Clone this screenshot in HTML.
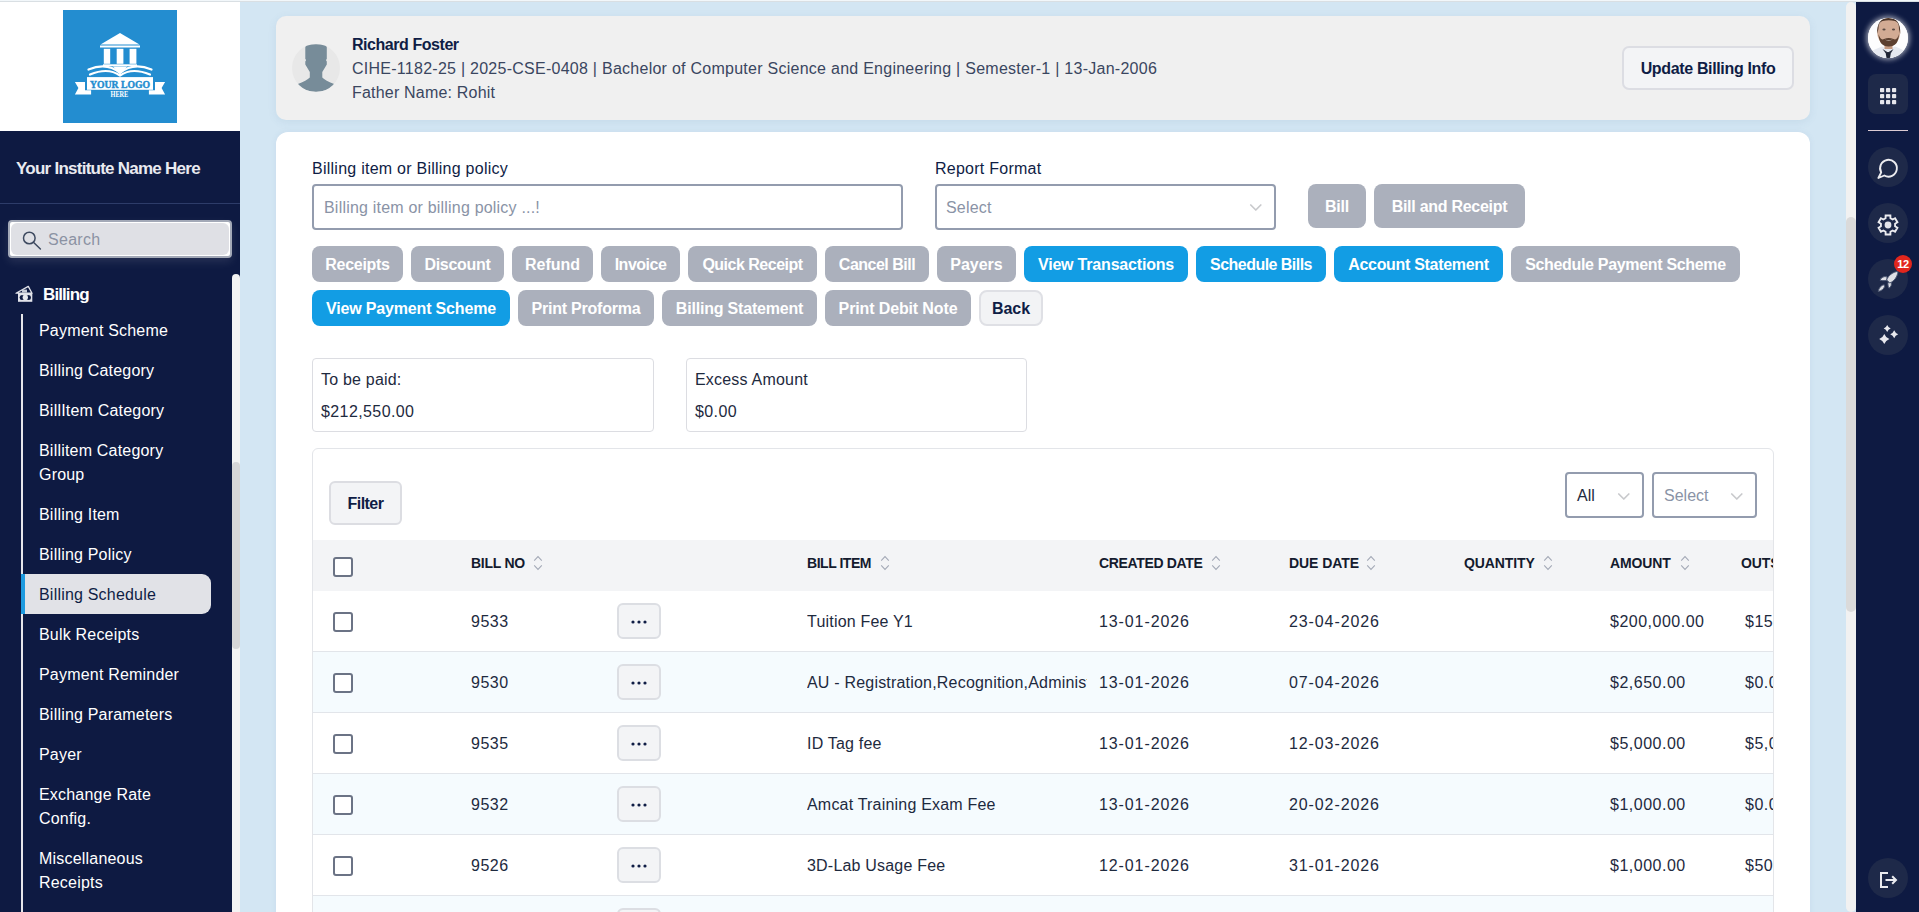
<!DOCTYPE html>
<html><head><meta charset="utf-8">
<style>
*{box-sizing:border-box;margin:0;padding:0}
html,body{width:1919px;height:912px;overflow:hidden}
body{font-family:"Liberation Sans",sans-serif;background:#d3e6f3;position:relative;color:#1b2540}
.abs{position:absolute}
.t{position:absolute;white-space:nowrap;line-height:20px}
/* sidebar */
#sb{left:0;top:0;width:240px;height:912px;background:#0e1a42}
#logoarea{left:0;top:0;width:240px;height:131px;background:#fff}
.mi{position:absolute;left:39px;color:#fff;font-size:16px;line-height:24px;white-space:nowrap;margin-top:1px;letter-spacing:0.2px}
/* rail */
#rail{left:1856px;top:0;width:63px;height:912px;background:#0e1a42}
.rc{position:absolute;left:12px;width:40px;height:40px;border-radius:50%;background:#1e2949}
/* buttons */
.btn{position:absolute;height:36px;border-radius:8px;background:#abb0bc;color:#fff;font-weight:700;font-size:16px;line-height:36px;padding-top:1px;text-align:center;white-space:nowrap}
.blue{background:#129de4}
.th{position:absolute;top:555px;font-weight:700;font-size:14px;line-height:16px;color:#141b2e;white-space:nowrap}
.cb{position:absolute;left:333px;width:20px;height:20px;border:2px solid #6b7385;border-radius:3px;background:#fff}
.row{position:absolute;left:313px;width:1460px;height:61px;border-bottom:1px solid #e2e5ea}
.td{position:absolute;font-size:16px;line-height:20px;color:#1e2a3e;white-space:nowrap;margin-top:1px;letter-spacing:0.3px}
.dots{position:absolute;left:617px;width:44px;height:36px;border:2px solid #dcdee3;border-radius:6px;background:#f3f4f6}
</style></head>
<body>
<div class="abs" style="left:0;top:0;width:1919px;height:1px;background:#f2f7fa;z-index:5"></div><div class="abs" style="left:0;top:1px;width:1919px;height:1px;background:#d9dfe3;z-index:5"></div>

<!-- SIDEBAR -->
<div id="sb" class="abs">
  <div id="logoarea" class="abs">
    <svg class="abs" style="left:63px;top:10px" width="114" height="113" viewBox="0 0 114 113">
      <rect width="114" height="113" fill="#238dd0"/>
      <g fill="#fff">
        <polygon points="57,23 37.5,34.6 76.5,34.6"/>
        <rect x="37" y="35.5" width="40" height="2"/>
        <rect x="40.8" y="38.8" width="6.4" height="15"/>
        <rect x="53.7" y="38.8" width="6.7" height="15"/>
        <rect x="66.6" y="38.8" width="6.8" height="15"/>
        <rect x="40" y="54.3" width="34" height="2"/>
        <polygon points="50,56.5 64.3,56.5 57,64"/>
      </g>
      <g fill="none" stroke="#fff" stroke-width="2.2" stroke-linecap="round">
        <path d="M25.5,59.5 Q44,52 57,63 Q70,52 88.5,59.5"/>
        <path d="M27,64.5 Q45,57 57,65.5 Q69,57 87,64.5"/>
      </g>
      <polygon fill="#fff" points="11.9,71.9 22,71.9 22,80.3 28.1,80.3 28.1,84.4 11.9,84.4 15.4,78.1"/>
      <polygon fill="#fff" points="102.1,71.9 92,71.9 92,80.3 85.9,80.3 85.9,84.4 102.1,84.4 98.6,78.1"/>
      <rect x="24" y="67.1" width="66" height="12.7" fill="#fff"/>
      <text x="27" y="78" font-family="Liberation Serif" font-weight="700" font-size="11.2" fill="#238dd0" stroke="#238dd0" stroke-width="0.45" textLength="60" lengthAdjust="spacingAndGlyphs">YOUR LOGO</text>
      <text x="47.5" y="87.2" font-family="Liberation Serif" font-weight="700" font-size="7.6" fill="#fff" textLength="17.8" lengthAdjust="spacingAndGlyphs">HERE</text>
    </svg>
  </div>
  <div class="t" style="left:16px;top:159px;font-size:17px;font-weight:700;color:#e9eaf0;letter-spacing:-0.75px">Your Institute Name Here</div>
  <div class="abs" style="left:0;top:203px;width:240px;height:1px;background:#2d3c69"></div>
  <div class="abs" style="left:8px;top:220px;width:224px;height:38px;background:#fff;border:2px solid #a3a9b7;border-radius:4px;box-shadow:0 4px 10px rgba(255,255,255,.10)">
    <div class="abs" style="left:1px;top:1px;right:1px;bottom:1px;background:#dfe0e5;border-radius:6px"></div>
    <svg class="abs" style="left:10px;top:8px" width="22" height="22" viewBox="0 0 22 22"><circle cx="9.3" cy="8" r="5.8" fill="none" stroke="#3e4a60" stroke-width="1.5"/><line x1="13.4" y1="12.2" x2="20.4" y2="19" stroke="#3e4a60" stroke-width="1.5" stroke-linecap="round"/></svg>
    <div class="t" style="left:38px;top:8px;font-size:16px;color:#8b92a3;letter-spacing:0.3px">Search</div>
  </div>
  <!-- scrollbar -->
  <div class="abs" style="left:232px;top:274px;width:8px;height:638px;background:#f3f3f3;border-radius:4px 4px 0 0"></div>
  <div class="abs" style="left:232px;top:462px;width:8px;height:187px;background:#d6d6d8;border-radius:4px"></div>
  <!-- billing -->
  <svg class="abs" style="left:15px;top:285px" width="19" height="18" viewBox="0 0 19 18">
    <polygon points="1,8.2 13.3,1.4 17,8.2" fill="#0e1a42" stroke="#e2e3ea" stroke-width="1.3" stroke-linejoin="round"/>
    <rect x="7" y="4.6" width="5" height="3" fill="#c8ccd8"/>
    <rect x="3" y="8" width="14.3" height="8.8" fill="#e2e3ea"/>
    <ellipse cx="7" cy="12.5" rx="2.4" ry="2.5" fill="#0e1a42"/>
    <ellipse cx="13.6" cy="12.5" rx="2.4" ry="2.5" fill="#0e1a42"/>
    <ellipse cx="10.3" cy="12.6" rx="2.7" ry="2.3" fill="#e8e9ef"/>
  </svg>
  <div class="t" style="left:43px;top:285px;font-size:17px;font-weight:700;color:#fff;letter-spacing:-0.9px">Billing</div>
  <div class="abs" style="left:21px;top:314px;width:2px;height:598px;background:#e6e6ea"></div>
  <div class="mi" style="top:318px">Payment Scheme</div>
  <div class="mi" style="top:358px">Billing Category</div>
  <div class="mi" style="top:398px">BillItem Category</div>
  <div class="mi" style="top:438px">Billitem Category</div>
  <div class="mi" style="top:462px">Group</div>
  <div class="mi" style="top:502px">Billing Item</div>
  <div class="mi" style="top:542px">Billing Policy</div>
  <div class="abs" style="left:21px;top:574px;width:190px;height:40px;background:#e1e2e7;border-radius:0 9px 9px 0;border-left:4px solid #1e9be0"></div>
  <div class="mi" style="top:582px;color:#0f1d45">Billing Schedule</div>
  <div class="mi" style="top:622px">Bulk Receipts</div>
  <div class="mi" style="top:662px">Payment Reminder</div>
  <div class="mi" style="top:702px">Billing Parameters</div>
  <div class="mi" style="top:742px">Payer</div>
  <div class="mi" style="top:782px">Exchange Rate</div>
  <div class="mi" style="top:806px">Config.</div>
  <div class="mi" style="top:846px">Miscellaneous</div>
  <div class="mi" style="top:870px">Receipts</div>
</div>

<!-- RAIL -->
<div id="rail" class="abs">
  <div class="abs" style="left:12px;top:18px;width:40px;height:40px;border-radius:50%;background:#f4f4f6;box-shadow:0 0 5px 2px rgba(255,255,255,.55);overflow:hidden">
    <svg width="40" height="40" viewBox="0 0 40 40">
      <rect width="40" height="40" fill="#fdfdfe"/>
      <path d="M0,40 L0,36 Q6,31 14,28.5 L20,31 L27,28.5 Q35,31 40,36 L40,40 Z" fill="#e6e9f0"/>
      <path d="M17.5,34 L23,34 L22,40 L18.5,40 Z" fill="#1e2434"/>
      <path d="M14.5,31 L20,34.5 L25.5,31 L23,35 L17.5,35 Z" fill="#2a3040"/>
      <rect x="16.5" y="24" width="8" height="7" fill="#c49a82"/>
      <ellipse cx="20.7" cy="14" rx="11.5" ry="14" fill="#d2ab94"/>
      <path d="M9.2,16 Q8.5,0 20.7,0 Q33,0 32.2,16 L31,11 Q31,4 27,3 Q20.7,1.5 14.5,3 Q10.5,4 10.4,11 Z" fill="#4a3428"/>
      <path d="M10.5,16 Q11,28.5 20.7,28.5 Q30.5,28.5 31,16 Q29,23 25.5,21 Q20.7,19 16,21 Q12.5,23 10.5,16 Z" fill="#5c4030"/>
      <path d="M16.5,21.5 Q20.7,23.5 25,21.5 Q20.7,22.5 16.5,21.5 Z" fill="#f0e8e4"/>
      <ellipse cx="16" cy="11.5" rx="1.6" ry="0.9" fill="#5a4a44"/>
      <ellipse cx="25.5" cy="11.5" rx="1.6" ry="0.9" fill="#5a4a44"/>
    </svg>
  </div>
  <div class="abs" style="left:12px;top:74px;width:40px;height:40px;border-radius:8px;background:#1e2949"></div>
  <svg class="abs" style="left:24px;top:88px" width="17" height="17" viewBox="0 0 17 17" fill="#e6e6ec"><rect x="0" y="0" width="4.2" height="4.2" rx=".8"/><rect x="6" y="0" width="4.2" height="4.2" rx=".8"/><rect x="12" y="0" width="4.2" height="4.2" rx=".8"/><rect x="0" y="6" width="4.2" height="4.2" rx=".8"/><rect x="6" y="6" width="4.2" height="4.2" rx=".8"/><rect x="12" y="6" width="4.2" height="4.2" rx=".8"/><rect x="0" y="12" width="4.2" height="4.2" rx=".8"/><rect x="6" y="12" width="4.2" height="4.2" rx=".8"/><rect x="12" y="12" width="4.2" height="4.2" rx=".8"/></svg>
  <div class="abs" style="left:12px;top:130px;width:40px;height:1px;background:#dccbd3"></div>
  <div class="rc" style="top:147px"></div>
  <svg class="abs" style="left:20px;top:156px" width="24" height="24" viewBox="0 0 24 24" fill="none" stroke="#ececf0" stroke-width="1.9" stroke-linejoin="round">
    <path d="M2.4,22 L5.2,16.4 A8.4,8.4 0 1 1 8.3,19.5 Z"/>
  </svg>
  <div class="rc" style="top:203px"></div>
  <svg class="abs" style="left:10px;top:203px" width="44" height="44" viewBox="0 0 44 44">
    <path d="M19.54,15.23 L19.63,12.49 L24.37,12.49 L24.46,15.23 L26.63,16.48 L29.05,15.19 L31.42,19.30 L29.09,20.75 L29.09,23.25 L31.42,24.70 L29.05,28.81 L26.63,27.52 L24.46,28.77 L24.37,31.51 L19.63,31.51 L19.54,28.77 L17.37,27.52 L14.95,28.81 L12.58,24.70 L14.91,23.25 L14.91,20.75 L12.58,19.30 L14.95,15.19 L17.37,16.48 Z" fill="none" stroke="#ececf0" stroke-width="1.9" stroke-linejoin="miter"/>
    <circle cx="22" cy="22" r="3.4" fill="#e4e4ea"/>
  </svg>
  <div class="rc" style="top:259px"></div>
  <svg class="abs" style="left:21px;top:269px" width="22" height="24" viewBox="0 0 22 24" stroke="#4a5570" stroke-width="1" stroke-linejoin="round">
    <path d="M10,7.8 C7,7 4.3,8.3 3,11.2 C6,12 8.6,11.7 10,11 Z" fill="#dfe0e6"/>
    <path d="M14,13.2 C15,15.2 14.2,17.6 12,19.2 C11,17.2 10.8,15.2 11,13.4 Z" fill="#dfe0e6"/>
    <path d="M21,2.4 C16,2.8 11.3,6.4 9.6,11 L12.8,14 C17.2,12.2 20.6,7.6 21,2.4 Z" fill="#dfe0e6"/>
    <path d="M7.2,15.8 C4.6,16 2,18.6 1.2,22.4 C4.6,21.9 7,19.8 7.6,17.4 Z" fill="#dfe0e6"/>
  </svg>
  <div class="abs" style="left:38px;top:255px;width:18px;height:18px;border-radius:50%;background:#e2261d;color:#fff;font-weight:700;font-size:11px;line-height:19px;text-align:center;letter-spacing:-0.3px">12</div>
  <div class="rc" style="top:315px"></div>
  <svg class="abs" style="left:10px;top:313px" width="44" height="44" viewBox="0 0 44 44" fill="#e8e8ee">
    <path d="M18.30,20.90 Q19.73,24.57 23.40,26.00 Q19.73,27.43 18.30,31.10 Q16.87,27.43 13.20,26.00 Q16.87,24.57 18.30,20.90 Z"/>
    <path d="M21.20,11.90 Q22.18,14.42 24.70,15.40 Q22.18,16.38 21.20,18.90 Q20.22,16.38 17.70,15.40 Q20.22,14.42 21.20,11.90 Z"/>
    <path d="M28.20,17.20 Q29.32,20.08 32.20,21.20 Q29.32,22.32 28.20,25.20 Q27.08,22.32 24.20,21.20 Q27.08,20.08 28.20,17.20 Z"/>
  </svg>
  <div class="rc" style="top:858px"></div>
  <svg class="abs" style="left:20px;top:866px" width="24" height="24" viewBox="0 0 24 24" fill="none" stroke="#ececf0" stroke-width="2" stroke-linejoin="miter">
    <path d="M12,7 H5 V21 H12"/><path d="M9.5,14 H19.5"/><path d="M16.2,10.2 L20,14 L16.2,17.8"/>
  </svg>
</div>

<!-- page scrollbar -->
<div class="abs" style="left:1846px;top:2px;width:10px;height:910px;background:#f1f1f1;border-radius:5px"></div>
<div class="abs" style="left:1846px;top:217px;width:10px;height:395px;background:#dadada;border-radius:5px"></div>

<!-- HEADER CARD -->
<div class="abs" style="left:276px;top:16px;width:1534px;height:104px;background:#f0f0f0;border-radius:10px;box-shadow:0 2px 8px rgba(80,120,160,.10)"></div>
<div class="abs" style="left:292px;top:44px;width:48px;height:48px;border-radius:50%;background:#e8e8e8;overflow:hidden">
  <svg width="48" height="48" viewBox="0 0 48 48"><path fill="#778c99" d="M13.3,3.5 Q13.3,0.2 18,0.2 L30,0.2 Q34.8,0.2 34.8,3.5 L34.8,15 L33.9,16 L34.8,17.5 L34.8,20.5 L30.3,28 L30.3,33.5 Q33,36.5 42.8,40.3 Q36,47.8 24,47.8 Q12,47.8 5.2,40.3 Q15,36.5 17.8,33.5 L17.8,28 L13.3,20.5 L13.3,17.5 L14.2,16 L13.3,15 Z"/></svg>
</div>
<div class="t" style="left:352px;top:35px;font-size:16px;font-weight:700;color:#0f1d45;letter-spacing:-0.45px">Richard Foster</div>
<div class="t" style="left:352px;top:59px;font-size:16px;color:#3a4660;letter-spacing:0.26px">CIHE-1182-25 | 2025-CSE-0408 | Bachelor of Computer Science and Engineering | Semester-1 | 13-Jan-2006</div>
<div class="t" style="left:352px;top:83px;font-size:16px;color:#3a4660;letter-spacing:0.2px">Father Name: Rohit</div>
<div class="abs" style="left:1622px;top:46px;width:172px;height:44px;background:#f3f4f6;border:2px solid #dcdde3;border-radius:7px"></div>
<div class="t" style="left:1622px;top:59px;width:172px;text-align:center;font-size:16px;font-weight:700;color:#0f1d45;letter-spacing:-0.35px">Update Billing Info</div>

<!-- MAIN CARD -->
<div class="abs" style="left:276px;top:132px;width:1534px;height:800px;background:#fff;border-radius:12px;box-shadow:0 0 6px rgba(80,120,160,.08)"></div>
<div class="t" style="left:312px;top:159px;font-size:16px;color:#0f1d45;letter-spacing:0.25px">Billing item or Billing policy</div>
<div class="abs" style="left:312px;top:184px;width:591px;height:46px;border:2px solid #939cae;border-radius:4px;background:#fff"></div>
<div class="t" style="left:324px;top:198px;font-size:16px;color:#8a93a6;letter-spacing:0.2px">Billing item or billing policy ...!</div>
<div class="t" style="left:935px;top:159px;font-size:16px;color:#0f1d45;letter-spacing:0.25px">Report Format</div>
<div class="abs" style="left:935px;top:184px;width:341px;height:46px;border:2px solid #939cae;border-radius:4px;background:#fff"></div>
<div class="t" style="left:946px;top:198px;font-size:16px;color:#8a93a6;letter-spacing:0.2px">Select</div>
<svg class="abs" style="left:1249px;top:203px" width="13" height="9" viewBox="0 0 13 9"><path d="M1.8,2 L6.8,7 L11.8,2" fill="none" stroke="#c8c9cc" stroke-width="1.7" stroke-linecap="round" stroke-linejoin="round"/></svg>
<div class="btn" style="left:1308px;top:184px;width:58px;height:44px;line-height:43px;letter-spacing:-0.2px">Bill</div>
<div class="btn" style="left:1374px;top:184px;width:151px;height:44px;line-height:43px;letter-spacing:-0.27px">Bill and Receipt</div>

<div class="btn" style="left:312px;top:246px;width:91px;letter-spacing:-0.29px">Receipts</div>
<div class="btn" style="left:411px;top:246px;width:93px;letter-spacing:-0.29px">Discount</div>
<div class="btn" style="left:512px;top:246px;width:81px;letter-spacing:0px">Refund</div>
<div class="btn" style="left:601px;top:246px;width:79px;letter-spacing:-0.5px">Invoice</div>
<div class="btn" style="left:688px;top:246px;width:129px;letter-spacing:-0.5px">Quick Receipt</div>
<div class="btn" style="left:825px;top:246px;width:104px;letter-spacing:-0.5px">Cancel Bill</div>
<div class="btn" style="left:937px;top:246px;width:79px;letter-spacing:0px">Payers</div>
<div class="btn blue" style="left:1024px;top:246px;width:164px;letter-spacing:-0.19px">View Transactions</div>
<div class="btn blue" style="left:1196px;top:246px;width:130px;letter-spacing:-0.54px">Schedule Bills</div>
<div class="btn blue" style="left:1334px;top:246px;width:169px;letter-spacing:-0.31px">Account Statement</div>
<div class="btn" style="left:1511px;top:246px;width:229px;letter-spacing:-0.32px">Schedule Payment Scheme</div>

<div class="btn blue" style="left:312px;top:290px;width:198px;letter-spacing:-0.17px">View Payment Scheme</div>
<div class="btn" style="left:518px;top:290px;width:136px;letter-spacing:-0.23px">Print Proforma</div>
<div class="btn" style="left:662px;top:290px;width:155px;letter-spacing:-0.19px">Billing Statement</div>
<div class="btn" style="left:825px;top:290px;width:146px;letter-spacing:-0.13px">Print Debit Note</div>
<div class="btn" style="left:979px;top:290px;width:64px;background:#f2f3f5;border:2px solid #dfe0e5;color:#0f1d45;line-height:33px;padding-top:0;letter-spacing:0px">Back</div>

<div class="abs" style="left:312px;top:358px;width:342px;height:74px;border:1px solid #dcdde2;border-radius:4px"></div>
<div class="t" style="left:321px;top:370px;font-size:16px;color:#1e2a3e;letter-spacing:0.2px">To be paid:</div>
<div class="t" style="left:321px;top:402px;font-size:16px;color:#1e2a3e;letter-spacing:0.4px">$212,550.00</div>
<div class="abs" style="left:686px;top:358px;width:341px;height:74px;border:1px solid #dcdde2;border-radius:4px"></div>
<div class="t" style="left:695px;top:370px;font-size:16px;color:#1e2a3e;letter-spacing:0.2px">Excess Amount</div>
<div class="t" style="left:695px;top:402px;font-size:16px;color:#1e2a3e;letter-spacing:0.4px">$0.00</div>

<!-- TABLE -->
<div class="abs" style="left:312px;top:448px;width:1462px;height:500px;border:1px solid #e3e5e9;border-radius:6px"></div>
<div class="abs" style="left:0;top:0;width:1773px;height:912px;overflow:hidden">
<div class="abs" style="left:313px;top:540px;width:1460px;height:51px;background:#f3f4f6"></div>
<div class="cb" style="top:557px"></div>
<div class="th" style="left:471px;letter-spacing:-0.25px">BILL NO</div>
<svg class="abs" style="left:533px;top:555px" width="10" height="16" viewBox="0 0 10 16"><path d="M1.2,5.6 L5,1.6 L8.8,5.6 M1.2,10.4 L5,14.4 L8.8,10.4" fill="none" stroke="#a3a9b6" stroke-width="1.05"/></svg>
<div class="th" style="left:807px;letter-spacing:-0.46px">BILL ITEM</div>
<svg class="abs" style="left:880px;top:555px" width="10" height="16" viewBox="0 0 10 16"><path d="M1.2,5.6 L5,1.6 L8.8,5.6 M1.2,10.4 L5,14.4 L8.8,10.4" fill="none" stroke="#a3a9b6" stroke-width="1.05"/></svg>
<div class="th" style="left:1099px;letter-spacing:-0.35px">CREATED DATE</div>
<svg class="abs" style="left:1211px;top:555px" width="10" height="16" viewBox="0 0 10 16"><path d="M1.2,5.6 L5,1.6 L8.8,5.6 M1.2,10.4 L5,14.4 L8.8,10.4" fill="none" stroke="#a3a9b6" stroke-width="1.05"/></svg>
<div class="th" style="left:1289px;letter-spacing:-0.06px">DUE DATE</div>
<svg class="abs" style="left:1366px;top:555px" width="10" height="16" viewBox="0 0 10 16"><path d="M1.2,5.6 L5,1.6 L8.8,5.6 M1.2,10.4 L5,14.4 L8.8,10.4" fill="none" stroke="#a3a9b6" stroke-width="1.05"/></svg>
<div class="th" style="left:1464px;letter-spacing:-0.11px">QUANTITY</div>
<svg class="abs" style="left:1543px;top:555px" width="10" height="16" viewBox="0 0 10 16"><path d="M1.2,5.6 L5,1.6 L8.8,5.6 M1.2,10.4 L5,14.4 L8.8,10.4" fill="none" stroke="#a3a9b6" stroke-width="1.05"/></svg>
<div class="th" style="left:1610px;letter-spacing:-0.12px">AMOUNT</div>
<svg class="abs" style="left:1680px;top:555px" width="10" height="16" viewBox="0 0 10 16"><path d="M1.2,5.6 L5,1.6 L8.8,5.6 M1.2,10.4 L5,14.4 L8.8,10.4" fill="none" stroke="#a3a9b6" stroke-width="1.05"/></svg>
<div class="th" style="left:1741px;letter-spacing:-0.1px">OUTSTANDING</div>
<div class="row" style="top:591px;background:#fff"></div>
<div class="cb" style="top:612px"></div>
<div class="td" style="left:471px;top:611px;letter-spacing:0.5px">9533</div>
<div class="dots" style="top:603px"><svg class="abs" style="left:12px;top:15px" width="16" height="4" viewBox="0 0 16 4" fill="#0f1d45"><circle cx="2" cy="2" r="1.6"/><circle cx="8" cy="2" r="1.6"/><circle cx="14" cy="2" r="1.6"/></svg></div>
<div class="td" style="left:807px;top:611px;width:280px;overflow:hidden;letter-spacing:0.2px">Tuition Fee Y1</div>
<div class="td" style="left:1099px;top:611px;letter-spacing:0.9px">13-01-2026</div>
<div class="td" style="left:1289px;top:611px;letter-spacing:0.9px">23-04-2026</div>
<div class="td" style="left:1610px;top:611px;letter-spacing:0.5px">$200,000.00</div>
<div class="td" style="left:1745px;top:611px;letter-spacing:0.5px">$150,000.00</div>
<div class="row" style="top:652px;background:#f5fbfe"></div>
<div class="cb" style="top:673px"></div>
<div class="td" style="left:471px;top:672px;letter-spacing:0.5px">9530</div>
<div class="dots" style="top:664px"><svg class="abs" style="left:12px;top:15px" width="16" height="4" viewBox="0 0 16 4" fill="#0f1d45"><circle cx="2" cy="2" r="1.6"/><circle cx="8" cy="2" r="1.6"/><circle cx="14" cy="2" r="1.6"/></svg></div>
<div class="td" style="left:807px;top:672px;width:280px;overflow:hidden;letter-spacing:0.2px">AU - Registration,Recognition,Administration Fee</div>
<div class="td" style="left:1099px;top:672px;letter-spacing:0.9px">13-01-2026</div>
<div class="td" style="left:1289px;top:672px;letter-spacing:0.9px">07-04-2026</div>
<div class="td" style="left:1610px;top:672px;letter-spacing:0.5px">$2,650.00</div>
<div class="td" style="left:1745px;top:672px;letter-spacing:0.5px">$0.00</div>
<div class="row" style="top:713px;background:#fff"></div>
<div class="cb" style="top:734px"></div>
<div class="td" style="left:471px;top:733px;letter-spacing:0.5px">9535</div>
<div class="dots" style="top:725px"><svg class="abs" style="left:12px;top:15px" width="16" height="4" viewBox="0 0 16 4" fill="#0f1d45"><circle cx="2" cy="2" r="1.6"/><circle cx="8" cy="2" r="1.6"/><circle cx="14" cy="2" r="1.6"/></svg></div>
<div class="td" style="left:807px;top:733px;width:280px;overflow:hidden;letter-spacing:0.2px">ID Tag fee</div>
<div class="td" style="left:1099px;top:733px;letter-spacing:0.9px">13-01-2026</div>
<div class="td" style="left:1289px;top:733px;letter-spacing:0.9px">12-03-2026</div>
<div class="td" style="left:1610px;top:733px;letter-spacing:0.5px">$5,000.00</div>
<div class="td" style="left:1745px;top:733px;letter-spacing:0.5px">$5,000.00</div>
<div class="row" style="top:774px;background:#f5fbfe"></div>
<div class="cb" style="top:795px"></div>
<div class="td" style="left:471px;top:794px;letter-spacing:0.5px">9532</div>
<div class="dots" style="top:786px"><svg class="abs" style="left:12px;top:15px" width="16" height="4" viewBox="0 0 16 4" fill="#0f1d45"><circle cx="2" cy="2" r="1.6"/><circle cx="8" cy="2" r="1.6"/><circle cx="14" cy="2" r="1.6"/></svg></div>
<div class="td" style="left:807px;top:794px;width:280px;overflow:hidden;letter-spacing:0.2px">Amcat Training Exam Fee</div>
<div class="td" style="left:1099px;top:794px;letter-spacing:0.9px">13-01-2026</div>
<div class="td" style="left:1289px;top:794px;letter-spacing:0.9px">20-02-2026</div>
<div class="td" style="left:1610px;top:794px;letter-spacing:0.5px">$1,000.00</div>
<div class="td" style="left:1745px;top:794px;letter-spacing:0.5px">$0.00</div>
<div class="row" style="top:835px;background:#fff"></div>
<div class="cb" style="top:856px"></div>
<div class="td" style="left:471px;top:855px;letter-spacing:0.5px">9526</div>
<div class="dots" style="top:847px"><svg class="abs" style="left:12px;top:15px" width="16" height="4" viewBox="0 0 16 4" fill="#0f1d45"><circle cx="2" cy="2" r="1.6"/><circle cx="8" cy="2" r="1.6"/><circle cx="14" cy="2" r="1.6"/></svg></div>
<div class="td" style="left:807px;top:855px;width:280px;overflow:hidden;letter-spacing:0.2px">3D-Lab Usage Fee</div>
<div class="td" style="left:1099px;top:855px;letter-spacing:0.9px">12-01-2026</div>
<div class="td" style="left:1289px;top:855px;letter-spacing:0.9px">31-01-2026</div>
<div class="td" style="left:1610px;top:855px;letter-spacing:0.5px">$1,000.00</div>
<div class="td" style="left:1745px;top:855px;letter-spacing:0.5px">$500.00</div>
<div class="row" style="top:896px;background:#f5fbfe"></div>
<div class="cb" style="top:917px"></div>
<div class="td" style="left:471px;top:916px;letter-spacing:0.5px">9520</div>
<div class="dots" style="top:908px"><svg class="abs" style="left:12px;top:15px" width="16" height="4" viewBox="0 0 16 4" fill="#0f1d45"><circle cx="2" cy="2" r="1.6"/><circle cx="8" cy="2" r="1.6"/><circle cx="14" cy="2" r="1.6"/></svg></div>
<div class="td" style="left:807px;top:916px;width:280px;overflow:hidden;letter-spacing:0.2px">Library Fee</div>
<div class="td" style="left:1099px;top:916px;letter-spacing:0.9px">12-01-2026</div>
<div class="td" style="left:1289px;top:916px;letter-spacing:0.9px">31-01-2026</div>
<div class="td" style="left:1610px;top:916px;letter-spacing:0.5px">$1,000.00</div>
<div class="td" style="left:1745px;top:916px;letter-spacing:0.5px">$0.00</div>
</div>
<div class="abs" style="left:329px;top:481px;width:73px;height:44px;background:#f3f4f6;border:2px solid #dcdde2;border-radius:6px"></div>
<div class="t" style="left:329px;top:494px;width:73px;text-align:center;font-size:16px;font-weight:700;color:#0f1d45;letter-spacing:-0.55px">Filter</div>
<div class="abs" style="left:1565px;top:472px;width:79px;height:46px;border:2px solid #939cae;border-radius:4px"></div>
<div class="t" style="left:1577px;top:486px;font-size:16px;color:#1e2a3e">All</div>
<svg class="abs" style="left:1617px;top:492px" width="13" height="9" viewBox="0 0 13 9"><path d="M1.8,2 L6.8,7 L11.8,2" fill="none" stroke="#c8c9cc" stroke-width="1.7" stroke-linecap="round" stroke-linejoin="round"/></svg>
<div class="abs" style="left:1652px;top:472px;width:105px;height:46px;border:2px solid #939cae;border-radius:4px"></div>
<div class="t" style="left:1664px;top:486px;font-size:16px;color:#8a93a6">Select</div>
<svg class="abs" style="left:1730px;top:492px" width="13" height="9" viewBox="0 0 13 9"><path d="M1.8,2 L6.8,7 L11.8,2" fill="none" stroke="#c8c9cc" stroke-width="1.7" stroke-linecap="round" stroke-linejoin="round"/></svg>

</body></html>
